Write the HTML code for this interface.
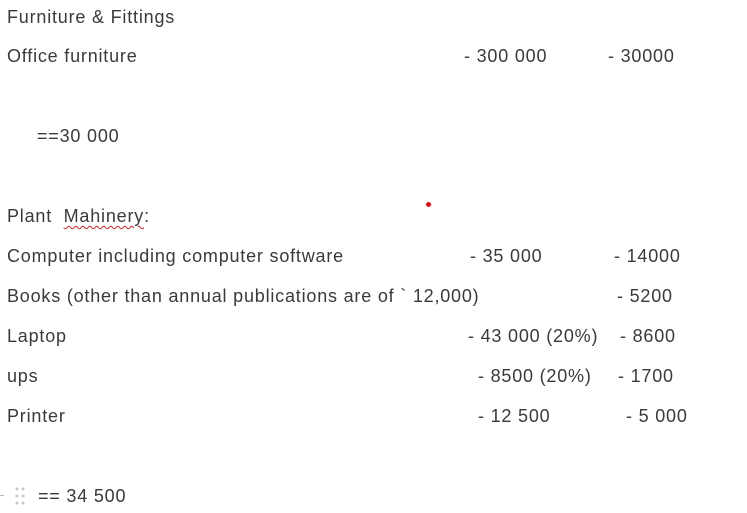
<!DOCTYPE html>
<html><head><style>
body{margin:0;width:747px;height:513px;background:#fff;position:relative;overflow:hidden;font-family:"Liberation Sans",sans-serif;font-size:18px;letter-spacing:0.8px;color:#3a3a3a;}
.t{position:absolute;line-height:22px;white-space:nowrap;}
.sq{text-decoration:underline wavy #e02020;text-decoration-thickness:1px;text-underline-offset:3px;}
</style></head><body>
<div class="t" style="left:7px;top:6px">Furniture &amp; Fittings</div>
<div class="t" style="left:7px;top:45px">Office furniture</div>
<div class="t" style="left:464px;top:45px">- 300 000</div>
<div class="t" style="left:608px;top:45px">- 30000</div>
<div class="t" style="left:37px;top:125px">==30 000</div>
<div style="position:absolute;left:426px;top:202px;width:5px;height:5px;border-radius:50%;background:#e01010"></div>
<div class="t" style="left:7px;top:205px">Plant&nbsp; <span class="sq">Mahinery</span>:</div>
<div class="t" style="left:7px;top:245px">Computer including computer software</div>
<div class="t" style="left:470px;top:245px">- 35 000</div>
<div class="t" style="left:614px;top:245px">- 14000</div>
<div class="t" style="left:7px;top:285px">Books (other than annual publications are of ` 12,000)</div>
<div class="t" style="left:617px;top:285px">- 5200</div>
<div class="t" style="left:7px;top:325px">Laptop</div>
<div class="t" style="left:468px;top:325px">- 43 000 (20%)</div>
<div class="t" style="left:620px;top:325px">- 8600</div>
<div class="t" style="left:7px;top:365px">ups</div>
<div class="t" style="left:478px;top:365px">- 8500 (20%)</div>
<div class="t" style="left:618px;top:365px">- 1700</div>
<div class="t" style="left:7px;top:405px">Printer</div>
<div class="t" style="left:478px;top:405px">- 12 500</div>
<div class="t" style="left:626px;top:405px">- 5 000</div>
<div style="position:absolute;left:0;top:495px;width:4px;height:1px;background:#bbb"></div>
<svg style="position:absolute;left:14px;top:486px" width="12" height="20"><g fill="#c8c8c8"><circle cx="3" cy="3" r="1.5"/><circle cx="9" cy="3" r="1.5"/><circle cx="3" cy="10" r="1.5"/><circle cx="9" cy="10" r="1.5"/><circle cx="3" cy="17" r="1.5"/><circle cx="9" cy="17" r="1.5"/></g></svg>
<div class="t" style="left:38px;top:485px">== 34 500</div>
</body></html>
